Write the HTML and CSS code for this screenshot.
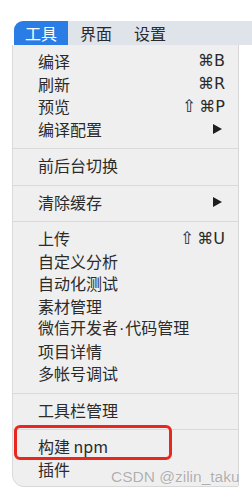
FILE: index.html
```html
<!DOCTYPE html>
<html lang="zh">
<head>
<meta charset="utf-8">
<link rel="stylesheet" href="styles.css">
</head>
<body>
<div class="screen">
  <div class="menubar">
    <span class="tab active">工具</span>
    <span class="tab second">界面</span>
    <span class="tab">设置</span>
  </div>
  <div class="dropdown">
    <div class="item"><span>编译</span><span class="key">⌘B</span></div>
    <div class="item"><span>刷新</span><span class="key">⌘R</span></div>
    <div class="item"><span>预览</span><span class="key"><span class="shift">⇧</span>⌘P</span></div>
    <div class="item"><span>编译配置</span><span class="arrow"></span></div>
    <div class="sep"></div>
    <div class="item"><span>前后台切换</span></div>
    <div class="sep"></div>
    <div class="item"><span>清除缓存</span><span class="arrow"></span></div>
    <div class="sep"></div>
    <div class="item"><span>上传</span><span class="key"><span class="shift">⇧</span>⌘U</span></div>
    <div class="item"><span>自定义分析</span></div>
    <div class="item"><span>自动化测试</span></div>
    <div class="item"><span>素材管理</span></div>
    <div class="item"><span>微信开发者<span class="dot">·</span>代码管理</span></div>
    <div class="item"><span>项目详情</span></div>
    <div class="item"><span>多帐号调试</span></div>
    <div class="sep"></div>
    <div class="item"><span>工具栏管理</span></div>
    <div class="sep"></div>
    <div class="item"><span>构建 npm</span></div>
    <div class="item"><span>插件</span></div>
  </div>
  <div class="highlight-box"></div>
  <div class="watermark">CSDN @zilin_taku</div>
</div>
</body>
</html>
```
FILE: styles.css
```css
html, body {
  margin: 0;
  padding: 0;
  background: #ffffff;
}
.screen {
  position: relative;
  width: 252px;
  height: 493px;
  padding: 21px 0 0 14px;
  box-sizing: border-box;
  font-family: "Noto Sans CJK SC", "Noto Sans", sans-serif;
  color: #2b2b2b;
  overflow: hidden;
}
.menubar {
  display: flex;
  align-items: center;
  height: 24px;
  background: #dfe3ea;
  border-top-left-radius: 9px;
  font-size: 16px;
  line-height: 24px;
  color: #2a2a2a;
}
.tab {
  padding: 0 11px;
  height: 24px;
}
.tab.second {
  padding-left: 12px;
}
.tab.active {
  background: #2b7de6;
  color: #ffffff;
  border-top-left-radius: 9px;
}
.dropdown {
  width: 225px;
  margin-left: -1px;
  background: #efefef;
  padding: 5px 0 6px;
  border-bottom-left-radius: 11px;
  box-shadow: 1px 0 0 #d6d6d6, -1px 0 0 #dadada, 0 1px 0 #d8d8d8;
}
.item {
  display: flex;
  align-items: center;
  justify-content: space-between;
  height: 22.5px;
  padding: 0 13px 0 25px;
  font-size: 16px;
  line-height: 22.5px;
}
.dot {
  font-family: "Liberation Sans", sans-serif;
  margin: 0 1px;
}
.key {
  font-family: "DejaVu Sans", "Liberation Sans", sans-serif;
  font-size: 16px;
}
.shift {
  font-size: 17px;
  margin-right: 3px;
}
.arrow {
  width: 0;
  height: 0;
  margin-right: 3px;
  border-top: 5.5px solid transparent;
  border-bottom: 5.5px solid transparent;
  border-left: 9px solid #1e1e1e;
}
.sep {
  height: 1px;
  background: #d9d9d9;
  margin: 8px 0 5px;
}
.highlight-box {
  position: absolute;
  left: 14px;
  top: 425px;
  width: 158px;
  height: 35px;
  box-sizing: border-box;
  border: 3px solid #e8281e;
  border-radius: 6px;
}
.watermark {
  position: absolute;
  left: 111px;
  top: 467px;
  font-family: "Liberation Sans", "DejaVu Sans", sans-serif;
  font-size: 15.5px;
  line-height: 20px;
  color: rgba(160, 160, 160, 0.85);
  text-shadow: 0 0 1px #ffffff;
  white-space: nowrap;
}
```
